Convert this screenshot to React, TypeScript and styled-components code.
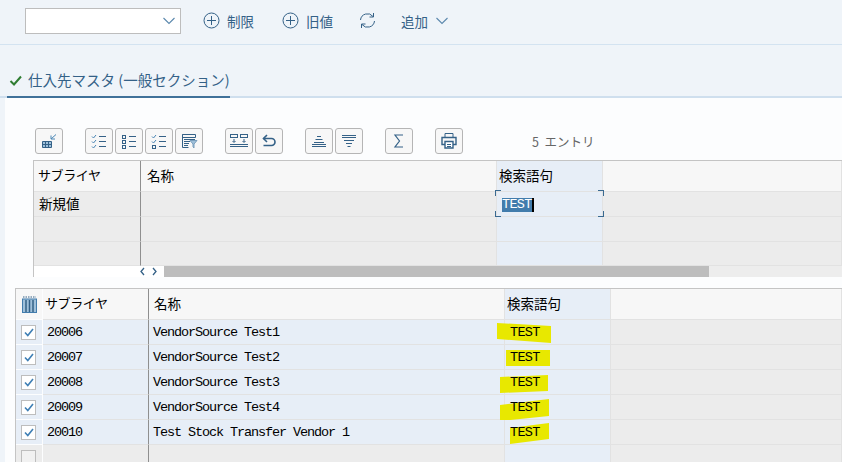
import styled, { createGlobalStyle } from 'styled-components';
import { ReactNode } from 'react';

const GlobalStyle = createGlobalStyle`
    html, body {
        margin: 0;
        padding: 0;
        background: #fcfdfe;
    }
`;

const Page = styled.div`
    width: 842px;
    height: 462px;
    overflow: hidden;
    background: #eff4f9;
    font-family: 'Noto Sans CJK JP', 'Liberation Sans', sans-serif;
    color: #000;
`;

const TopBar = styled.div`
    height: 44px;
    border-bottom: 1px solid #d3e3f1;
    display: flex;
    align-items: center;
    padding-left: 25px;
`;

const Dropdown = styled.div`
    width: 156px;
    height: 26px;
    box-sizing: border-box;
    background: #fff;
    border: 1px solid #bdbdbd;
    display: flex;
    align-items: center;
    justify-content: flex-end;
    padding-right: 4px;
    margin-right: 22px;
    margin-top: -2px;
`;

const BarAction = styled.div<{ $gap: number }>`
    display: flex;
    align-items: center;
    gap: 7px;
    font-size: 13.5px;
    line-height: 20px;
    color: #346187;
    margin-right: ${(p) => p.$gap}px;
    margin-top: -3px;
`;

const SectionBar = styled.div`
    height: 51px;
    border-bottom: 2px solid #cfdfee;
    padding-left: 7px;
    display: flex;
    align-items: flex-end;
`;

const SectionTab = styled.div`
    width: 223px;
    height: 32px;
    margin-bottom: -2px;
    border-bottom: 2px solid #3f7199;
    display: flex;
    align-items: flex-start;
    gap: 5px;
    font-size: 14.5px;
    line-height: 20px;
    color: #346187;
    white-space: nowrap;
    padding-top: 4px;
    box-sizing: border-box;
`;

const Content = styled.div`
    margin-left: 5px;
    height: 365px;
    background: #fcfdfe;
    padding-top: 30px;
    box-sizing: border-box;
`;

const Toolbar = styled.div`
    display: flex;
    align-items: center;
    height: 26px;
    padding-left: 30px;
    margin-bottom: 6px;
`;

const ToolGroup = styled.div<{ $after: number }>`
    display: flex;
    gap: 2px;
    margin-right: ${(p) => p.$after}px;
`;

const ToolButton = styled.div`
    width: 28px;
    height: 26px;
    box-sizing: border-box;
    border: 1px solid #b5b5b5;
    border-radius: 3px;
    background: #f7f7f7;
    display: flex;
    align-items: center;
    justify-content: center;
`;

const EntryCount = styled.div`
    font-size: 12.5px;
    color: #666;
    margin-left: 69px;
    white-space: pre;
`;

const UpperTable = styled.div`
    margin-left: 28px;
    border: 1px solid #c4c4c4;
    border-right: none;
    height: 117px;
    box-sizing: border-box;
    background: #ececec;
`;

const UpperRow = styled.div<{ $h: number }>`
    display: grid;
    grid-template-columns: 107px 356px 106px 1fr;
    height: ${(p) => p.$h}px;
    box-sizing: border-box;
`;

const LowerTable = styled.div`
    margin-left: 10px;
    margin-top: 11px;
    border-top: 1px solid #c4c4c4;
    border-left: 1px solid #c4c4c4;
`;

const LowerRow = styled.div<{ $h: number }>`
    display: grid;
    grid-template-columns: 27px 106px 356px 106px 1fr;
    height: ${(p) => p.$h}px;
    box-sizing: border-box;
`;

const Cell = styled.div<{ $bg: string; $strong?: boolean; $pad?: number }>`
    position: relative;
    background: ${(p) => p.$bg};
    border-bottom: 1px solid #e2e2e2;
    border-right: 1px solid ${(p) => (p.$strong ? '#8f8f8f' : '#e2e2e2')};
    box-sizing: border-box;
    display: flex;
    align-items: center;
    padding-left: ${(p) => p.$pad ?? 4}px;
    padding-bottom: 3px;
    font-size: 13.5px;
    white-space: nowrap;
`;

const DataCell = styled(Cell)`
    padding-bottom: 0;
    font-family: 'Liberation Mono', monospace;
    font-size: 13.5px;
    letter-spacing: -1.1px;
`;

const KanaLabel = styled.span`
    font-size: 13px;
    letter-spacing: -0.4px;
`;

const SelectorCell = styled.div<{ $bg: string }>`
    background: ${(p) => p.$bg};
    border-bottom: 1px solid #fcfdfe;
    border-right: 1px solid #fcfdfe;
    box-sizing: border-box;
    display: flex;
    align-items: center;
    justify-content: center;
`;

const CheckBox = styled.div<{ $on?: boolean }>`
    width: 15px;
    height: 15px;
    box-sizing: border-box;
    border: 1px solid #bdbdbd;
    background: ${(p) => (p.$on ? '#fff' : '#f1f1f1')};
    display: flex;
    align-items: center;
    justify-content: center;
    margin-left: -1px;
`;

const FocusCell = styled.div`
    position: absolute;
    left: -2px;
    right: -2px;
    top: -2px;
    bottom: -1px;
    z-index: 2;
`;

const Corner = styled.span<{ $v: 'top' | 'bottom'; $h: 'left' | 'right' }>`
    position: absolute;
    width: 5px;
    height: 5px;
    ${(p) => p.$v}: 0;
    ${(p) => p.$h}: 0;
    border-${(p) => p.$v}: 1px solid #3a6a91;
    border-${(p) => p.$h}: 1px solid #3a6a91;
`;

const SelectedText = styled.span`
    background: #427cac;
    color: #fff;
    font-family: 'Liberation Mono', monospace;
    font-size: 13.5px;
    letter-spacing: -0.7px;
    line-height: 14px;
    margin-top: 5px;
    border-right: 2px solid #000;
`;

const ScrollRow = styled.div`
    display: grid;
    grid-template-columns: 130px 545px 1fr;
    height: 11px;
    background: #fff;
`;

const ScrollArrows = styled.div`
    display: flex;
    justify-content: flex-end;
    align-items: center;
    gap: 5px;
    padding-right: 6px;
`;

const ScrollThumb = styled.div`
    background: #bdbdbd;
`;

const ScrollTrack = styled.div`
    background: #ededed;
`;

const MarkedText = styled.span`
    position: relative;
    margin-left: 1px;
    margin-top: 1px;
    letter-spacing: -0.7px;
`;

const Marker = styled.svg`
    position: absolute;
    left: 0;
    top: 0;
    width: 60px;
    height: 25px;
    overflow: visible;
`;

const Icon = ({ children, w = 18, h = 18 }: { children: ReactNode; w?: number; h?: number }) => (
    <svg width={w} height={h} viewBox={`0 0 ${w} ${h}`} fill="none" stroke="#346187" strokeWidth="1">
        {children}
    </svg>
);

const Chevron = () => (
    <svg width="14" height="8" viewBox="0 0 14 8" fill="none" stroke="#5b88ad" strokeWidth="1.1">
        <path d="M1.5 1 L7 6.5 L12.5 1" />
    </svg>
);

const PlusCircle = () => (
    <Icon w={17} h={17}>
        <circle cx="8.5" cy="8.5" r="7.5" />
        <path d="M8.5 4v9M4 8.5h9" />
    </Icon>
);

const Refresh = () => (
    <Icon w={17} h={17}>
        <path d="M1.5 8 A7 7 0 0 1 14 4.5" />
        <path d="M15.5 9 A7 7 0 0 1 3 12.5" />
        <path d="M14.5 1v4h-4M2.5 16v-4h4" />
    </Icon>
);

const ListIcon = ({ boxes }: { boxes: boolean[] }) => (
    <Icon w={16} h={16}>
        {boxes.map((box, i) => {
            const y = 2 + i * 5;
            return (
                <g key={i}>
                    {box ? (
                        <rect x="1.5" y={y + 0.5} width="3" height="3" />
                    ) : (
                        <path d={`M1 ${y + 1.5} l1.5 1.5 l2.5 -3`} stroke="#4a86b5" />
                    )}
                    <path d={`M8 ${y + 1.5}h7`} />
                </g>
            );
        })}
    </Icon>
);

const toolIcons = {
    export: (
        <Icon>
            <path d="M2.500 9.500h9v6h-9z" fill="#9fc0da" />
            <path d="M2.500 12.500h9M5.500 9.500v6M8.500 9.500v6" />
            <path d="M16 2.500l-5 4.500M11 3.500v3.500h4" stroke="#4a86b5" />
        </Icon>
    ),
    layout: (
        <Icon>
            <path d="M2.500 2.500h13v3h-13zM2.500 2.500v13h6" />
            <path d="M4 7.500h11M4 9.500h6M4 11.500h5M4 13.500h4" />
            <path d="M10 8.500h7l-3 3.500v4l-1-1v-3z" fill="#9fc0da" stroke="#7a9fbd" />
        </Icon>
    ),
    transfer: (
        <Icon w={20} h={16}>
            <rect x="1.500" y="1.500" width="7" height="3" />
            <rect x="11.500" y="1.500" width="7" height="3" />
            <path d="M5 6v3M3.500 8l1.500 1.500L6.500 8M15 6v3M13.500 8l1.500 1.500L16.500 8" />
            <path d="M1 11.500h18M1 13.500h18" />
        </Icon>
    ),
    undo: (
        <Icon w={16} h={16}>
            <path d="M2.500 5.500h8a3.500 3.500 0 0 1 0 7h-8" strokeWidth="1.6" />
            <path d="M6 2 L2.500 5.500 L6 9" strokeWidth="1.6" />
        </Icon>
    ),
    alignUp: (
        <Icon>
            <path d="M7 4.500h4M5.500 7.500h7M4 10.500h10M2 12.500h14M2 14.500h14" />
        </Icon>
    ),
    filter: (
        <Icon>
            <path d="M2 3.500h14M2 5.500h14M4 8.500h10M6 11.500h6M7.500 14.500h3" />
        </Icon>
    ),
    sum: (
        <Icon w={12} h={16}>
            <path d="M10 2H2l4.500 6L2 14h8" strokeWidth="1.2" />
        </Icon>
    ),
    print: (
        <Icon>
            <path d="M5 5V1.500h8V5" />
            <path d="M2 5.500h14v7H2z" strokeWidth="1.4" />
            <path d="M5 9.500h8V16H5z" fill="#fff" strokeWidth="1.4" />
            <path d="M7 12.500h4M7 14.500h4" />
        </Icon>
    ),
};

const toolGroups = [
    { after: 22, icons: [toolIcons.export] },
    {
        after: 22,
        icons: [
            <ListIcon boxes={[false, false, false]} />,
            <ListIcon boxes={[true, true, true]} />,
            <ListIcon boxes={[false, false, true]} />,
            toolIcons.layout,
        ],
    },
    { after: 22, icons: [toolIcons.transfer, toolIcons.undo] },
    { after: 22, icons: [toolIcons.alignUp, toolIcons.filter] },
    { after: 22, icons: [toolIcons.sum] },
    { after: 0, icons: [toolIcons.print] },
];

const HEAD = '#f7f7f7';
const BLUE = '#e7eef7';
const GREY = '#ececec';

const vendors = [
    { id: '20006', name: 'VendorSource Test1', mark: '2,3 56,6 56,23 2,19' },
    { id: '20007', name: 'VendorSource Test2', mark: '11,5 55,5 55,21 11,21' },
    { id: '20008', name: 'VendorSource Test3', mark: '5,7 53,5 53,21 5,23' },
    { id: '20009', name: 'VendorSource Test4', mark: '5,10 54,4 54,21 5,26' },
    { id: '20010', name: 'Test Stock Transfer Vendor 1', mark: '15,8 54,3 54,19 15,24' },
];

export default function App() {
    return (
        <Page>
            <GlobalStyle />
            <TopBar>
                <Dropdown>
                    <Chevron />
                </Dropdown>
                <BarAction $gap={28}>
                    <PlusCircle />
                    制限
                </BarAction>
                <BarAction $gap={26}>
                    <PlusCircle />
                    旧値
                </BarAction>
                <BarAction $gap={25}>
                    <Refresh />
                </BarAction>
                <BarAction $gap={0}>
                    追加
                    <Chevron />
                </BarAction>
            </TopBar>
            <SectionBar>
                <SectionTab>
                    <svg width="14" height="20" viewBox="0 0 14 20" fill="none" stroke="#2f7d32" strokeWidth="2" style={{ marginLeft: 2 }}>
                        <path d="M1.500 11 L5 14.500 L12 6.500" />
                    </svg>
                    仕入先マスタ (一般セクション)
                </SectionTab>
            </SectionBar>
            <Content>
                <Toolbar>
                    {toolGroups.map((group, i) => (
                        <ToolGroup key={i} $after={group.after}>
                            {group.icons.map((icon, j) => (
                                <ToolButton key={j}>{icon}</ToolButton>
                            ))}
                        </ToolGroup>
                    ))}
                    <EntryCount>5  エントリ</EntryCount>
                </Toolbar>
                <UpperTable>
                    <UpperRow $h={31}>
                        <Cell $bg={HEAD} $strong><KanaLabel>サブライヤ</KanaLabel></Cell>
                        <Cell $bg={HEAD} $pad={6}>名称</Cell>
                        <Cell $bg={BLUE} $pad={2}>検索語句</Cell>
                        <Cell $bg={HEAD} />
                    </UpperRow>
                    <UpperRow $h={25}>
                        <Cell $bg={GREY} $strong $pad={5}>新規値</Cell>
                        <Cell $bg={GREY} />
                        <Cell $bg={BLUE} $pad={5}>
                            <FocusCell>
                                <Corner $v="top" $h="left" />
                                <Corner $v="top" $h="right" />
                                <Corner $v="bottom" $h="left" />
                                <Corner $v="bottom" $h="right" />
                            </FocusCell>
                            <SelectedText>TEST</SelectedText>
                        </Cell>
                        <Cell $bg={GREY} />
                    </UpperRow>
                    <UpperRow $h={25}>
                        <Cell $bg={GREY} $strong />
                        <Cell $bg={GREY} />
                        <Cell $bg={BLUE} />
                        <Cell $bg={GREY} />
                    </UpperRow>
                    <UpperRow $h={24}>
                        <Cell $bg={GREY} $strong />
                        <Cell $bg={GREY} />
                        <Cell $bg={BLUE} />
                        <Cell $bg={GREY} />
                    </UpperRow>
                    <ScrollRow>
                        <ScrollArrows>
                            <svg width="7" height="9" viewBox="0 0 7 9" fill="none" stroke="#346187" strokeWidth="1.3">
                                <path d="M5 1 L2 4.500 L5 8" />
                            </svg>
                            <svg width="7" height="9" viewBox="0 0 7 9" fill="none" stroke="#346187" strokeWidth="1.3">
                                <path d="M2 1 L5 4.500 L2 8" />
                            </svg>
                        </ScrollArrows>
                        <ScrollThumb />
                        <ScrollTrack />
                    </ScrollRow>
                </UpperTable>
                <LowerTable>
                    <LowerRow $h={31}>
                        <SelectorCell $bg={HEAD}>
                            <svg width="15" height="17" viewBox="0 0 15 17" fill="none" stroke="#346187">
                                <path d="M1 1h13" strokeDasharray="1.500 1" />
                                <rect x="0.500" y="3" width="14" height="13.500" fill="#9fc0da" stroke="#427cac" />
                                <path d="M4 4v12M7.500 4v12M11 4v12" strokeWidth="1.500" />
                            </svg>
                        </SelectorCell>
                        <Cell $bg={HEAD} $strong $pad={2}><KanaLabel>サブライヤ</KanaLabel></Cell>
                        <Cell $bg={HEAD} $pad={5}>名称</Cell>
                        <Cell $bg={BLUE} $pad={2}>検索語句</Cell>
                        <Cell $bg={HEAD} />
                    </LowerRow>
                    {vendors.map((vendor) => (
                        <LowerRow key={vendor.id} $h={25}>
                            <SelectorCell $bg={BLUE}>
                                <CheckBox $on>
                                    <svg width="10" height="9" viewBox="0 0 10 9" fill="none" stroke="#3f7fb5" strokeWidth="1.600">
                                        <path d="M1 4.500 L3.800 7.500 L9 1" />
                                    </svg>
                                </CheckBox>
                            </SelectorCell>
                            <DataCell $bg={BLUE} $strong>{vendor.id}</DataCell>
                            <DataCell $bg={BLUE}>{vendor.name}</DataCell>
                            <DataCell $bg={BLUE}>
                                <Marker viewBox="0 0 60 25">
                                    <polygon points={vendor.mark} transform="translate(-10 0)" fill="#e8e800" />
                                </Marker>
                                <MarkedText>TEST</MarkedText>
                            </DataCell>
                            <Cell $bg={GREY} />
                        </LowerRow>
                    ))}
                    <LowerRow $h={25}>
                        <SelectorCell $bg={GREY}>
                            <CheckBox />
                        </SelectorCell>
                        <Cell $bg={GREY} $strong />
                        <Cell $bg={GREY} />
                        <Cell $bg={BLUE} />
                        <Cell $bg={GREY} />
                    </LowerRow>
                </LowerTable>
            </Content>
        </Page>
    );
}
